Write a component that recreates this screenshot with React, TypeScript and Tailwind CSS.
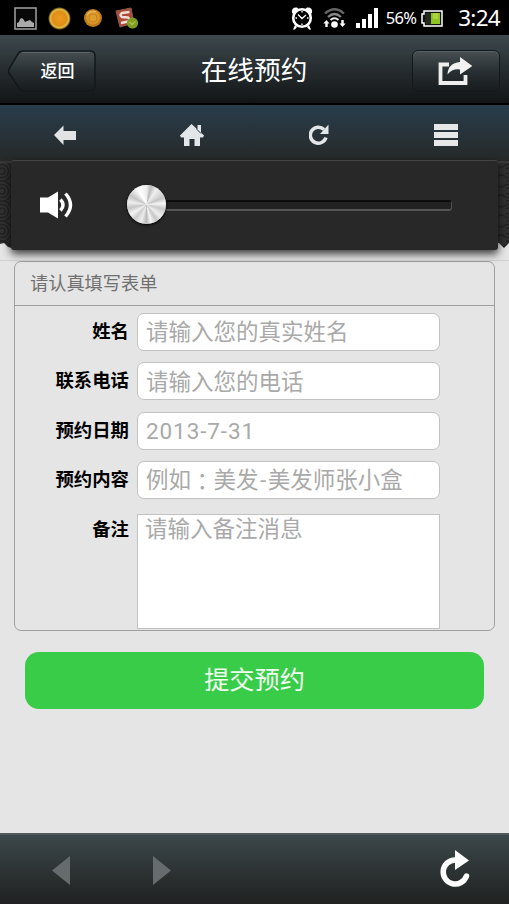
import { useState } from 'react';

interface Field {
  label: string;
  placeholder: React.ReactNode;
}

const fields: Field[] = [
  { label: '姓名', placeholder: '请输入您的真实姓名' },
  { label: '联系电话', placeholder: '请输入您的电话' },
  { label: '预约日期', placeholder: <span className="tracking-[0.900px]">2013-7-31</span> },
  {
    label: '预约内容',
    placeholder: (
      <>
        例如<span className="font-['Noto_Sans_CJK_TC',sans-serif]" lang="zh-TW">：</span>美发
        <span className="px-[1.500px]">-</span>美发师张小盒
      </>
    ),
  },
];

export default function App() {
  return (
    <div className="relative flex h-[904px] w-[509px] flex-col overflow-hidden bg-[#e5e5e5] font-[Roboto,'Noto_Sans_CJK_SC',sans-serif]">
      <StatusBar />
      <TitleBar />
      <NavBar />
      <Banner />
      <main className="flex flex-1 flex-col border-t border-[#d2d2d2]">
        <BookingForm />
        <button className="mr-[25px] ml-[25px] mt-[21px] h-[57px] rounded-[14px] bg-[#39cc49] text-[25.2px] leading-none text-[#f0fff0]">
          提交预约
        </button>
      </main>
      <BottomBar />
      <VolumePanel />
    </div>
  );
}

function StatusBar() {
  return (
    <div className="flex h-[35px] shrink-0 items-center justify-between bg-black pt-[1px] pr-[9px] pl-[14px] text-white">
      <div className="flex items-center">
        <svg width="23" height="23" viewBox="0 0 23 23">
          <rect x="1" y="1" width="21" height="21" fill="#080808" stroke="#999" strokeWidth="1.6" />
          <path d="M3 20v-4l2-1 1-3 2-1 2 2 1 2 2-1 3-1 2 2 2 1v4z" fill="#aaa" />
        </svg>
        <svg className="ml-[11px]" width="23" height="23" viewBox="0 0 23 23">
          <defs>
            <radialGradient id="sun">
              <stop offset="0" stopColor="#ee9b22" />
              <stop offset=".62" stopColor="#df8d16" />
              <stop offset=".8" stopColor="#e0bd48" />
              <stop offset=".9" stopColor="#8c6b20" />
              <stop offset="1" stopColor="#000" />
            </radialGradient>
          </defs>
          <circle cx="11.5" cy="11.5" r="11.5" fill="url(#sun)" />
        </svg>
        <svg className="ml-[12px]" width="20" height="20" viewBox="0 0 20 20">
          <circle cx="10" cy="10" r="9" fill="#c17a18" />
          <circle cx="10" cy="9.5" r="7" fill="#d79428" />
          <circle cx="10" cy="10" r="4" fill="#df9d2c" stroke="#c98520" />
          <path d="M4 7Q7 2 13 4" fill="none" stroke="#e4b157" strokeWidth="1.6" />
        </svg>
        <svg className="ml-[12px]" width="25" height="23" viewBox="0 0 25 23">
          <path d="M1 4 16 1l3 15-14 4z" fill="#ad4b39" stroke="#8c5b4c" strokeWidth="1" />
          <path d="M14.500 5 7 6Q4 8 7 10l6 .5q3 2 0 4l-7 1.500" fill="none" stroke="#eedfd6" strokeWidth="2.500" />
          <circle cx="17.500" cy="16" r="5.600" fill="#7e9d23" />
          <path d="m14.500 15 2.500 2.500 3.500-3" fill="none" stroke="#a9c248" strokeWidth="1.500" />
        </svg>
      </div>
      <div className="flex items-center">
        <svg width="22" height="24" viewBox="0 0 22 24">
          <circle cx="11" cy="12" r="8.800" fill="none" stroke="#fff" strokeWidth="2.600" />
          <path d="M1 7Q0 1 6 1.500L7.500 3 2.500 8zM21 7q1-6-5-5.500L14.500 3l5 5zM4 19l2 2-2 2.500H2zM18 19l-2 2 2 2.500h2z" fill="#fff" />
          <path d="m7 8.500 4 4 4-3.500M11 5v1.500M11 17.500V19M4.500 12H6M16 12h1.500" fill="none" stroke="#fff" strokeWidth="1.300" />
        </svg>
        <svg className="ml-[10px]" width="23" height="22" viewBox="0 0 23 22">
          <path d="M2 6.500Q11.500-2 21 6.500" fill="none" stroke="#666" strokeWidth="2.200" />
          <path d="M5 10q6.500-6 13 0" fill="none" stroke="#888" strokeWidth="2.200" />
          <path d="M7.500 13q4-3.500 8 0" fill="none" stroke="#eee" strokeWidth="2" />
          <circle cx="11.500" cy="17.500" r="3.300" fill="#fff" />
          <path d="m3.500 13 3 3.500H4.700V20H2.300v-3.500h-2zM19.500 20l-3-3.500h1.800V13h2.400v3.500h2z" fill="#fff" />
        </svg>
        <svg className="ml-[10px]" width="22" height="20" viewBox="0 0 22 20">
          <path d="M0 15h4v5H0zM6 11h4v9H6zM12 6h4v14h-4zM18 0h4v20h-4z" fill="#fff" />
        </svg>
        <span className="ml-[8px] font-['Noto_Sans',sans-serif] text-[16.500px] tracking-[-0.700px]">56%</span>
        <svg className="ml-[5px]" width="22" height="17" viewBox="0 0 22 17">
          <path d="M3 1h18v15H3v-3H1V4h2z" fill="#111" stroke="#fff" strokeWidth="1.500" />
          <path d="M4.500 3H10v11H4.500z" fill="#252a20" />
          <path d="M10 3h9v11h-9z" fill="#8fc31f" />
          <path d="M12 3h5v6h-5z" fill="#a8d63a" />
        </svg>
        <span className="ml-[15px] font-['Noto_Sans',sans-serif] text-[22.500px] leading-none tracking-[-0.700px]">3:24</span>
      </div>
    </div>
  );
}

function TitleBar() {
  return (
    <header className="grid h-[70px] shrink-0 grid-cols-[88px_1fr_88px] items-center border-b-2 border-black bg-linear-to-b from-[#3d494e] via-[#272d30] to-[#121516] pt-[3px] pr-[9px] pl-[8px] text-white">
      <button className="relative flex h-[42px] items-center justify-center pt-[2px] pl-[11px] text-[17px]">
        <svg className="absolute inset-0" width="88" height="42" viewBox="0 0 88 42">
          <defs>
            <linearGradient id="back" x2="0" y2="1">
              <stop offset="0" stopColor="#474f52" />
              <stop offset=".5" stopColor="#293033" />
              <stop offset="1" stopColor="#171b1d" />
            </linearGradient>
          </defs>
          <path d="M15 1H82q5 0 5 5v30q0 5-5 5H16q-3 0-5-3L1 23q-1-2 0-4L10 4q2-3 5-3z" fill="url(#back)" stroke="#12191c" strokeWidth="1.500" />
          <path d="M14 2.500H82" stroke="#5c6568" strokeWidth="1" />
        </svg>
        <span className="relative font-medium">返回</span>
      </button>
      <h1 className="pt-px text-center text-[26.700px] leading-none">在线预约</h1>
      <button className="flex h-[42px] items-center justify-center rounded-[6px] border-[1.500px] border-[#12191c] bg-linear-to-b from-[#474f52] via-[#293033] to-[#171b1d] pr-[2px] shadow-[inset_0_1px_0_#586265]">
        <svg width="34" height="30" viewBox="0 0 34 30">
          <path d="M11 8.500H2.500v18.500h25V19" fill="none" stroke="#eee" strokeWidth="3.800" />
          <path d="M22 1 34.500 10 22 18.500v-5Q14 12.500 9.500 18.500 10 7 22 6z" fill="#f1f1f1" />
        </svg>
      </button>
    </header>
  );
}

function NavBar() {
  return (
    <nav className="grid h-[56px] shrink-0 grid-cols-4 place-items-center bg-linear-to-b from-[#293d4c] to-[#262928] pt-[3px] pl-[1px]">
      <svg width="22" height="20" viewBox="0 0 22 20">
        <path d="M0 10 9.500.5V6H22v9H9.500v5z" fill="#e2e3e4" />
      </svg>
      <svg width="24" height="22" viewBox="0 0 24 22">
        <path d="M11.500 0 17 5V1h4v7.500l3 3-1 2h-3v8.500h-5.500v-7h-5v7H4v-8.500H1l-1-2z" fill="#e2e6e9" />
        <path d="M17 1v4.500l4 4" fill="none" stroke="#2a3439" strokeWidth="1" />
      </svg>
      <svg width="20" height="22" viewBox="0 0 20 22">
        <path d="M15 5.500A8 8 0 1 0 17 13.500" fill="none" stroke="#e2e6e9" strokeWidth="3.500" />
        <path d="M19.500.5V10H11z" fill="#e2e6e9" />
      </svg>
      <svg width="24" height="22" viewBox="0 0 24 22">
        <path d="M0 0h24v6H0zM0 8h24v6H0zM0 16h24v6H0z" fill="#e6e7e8" />
      </svg>
    </nav>
  );
}

// engraved ripple strip with a torn lower edge
function Banner() {
  return (
    <svg className="h-[99px] w-full shrink-0" width="509" height="99" viewBox="0 0 509 99">
      <defs>
        <pattern id="ripple" width="22" height="20" patternUnits="userSpaceOnUse">
          <rect width="22" height="20" fill="#303030" />
          <g fill="none" stroke="#222" strokeWidth="1.500">
            <circle cx="2" cy="10" r="3" />
            <circle cx="2" cy="10" r="6.500" />
            <circle cx="2" cy="10" r="10" />
            <circle cx="17" cy="20" r="6" />
            <circle cx="17" cy="0" r="6" />
          </g>
        </pattern>
      </defs>
      <path d="M0 0h509v82l-5 5-5-5-487 5-4-1-4-4-4 1z" fill="url(#ripple)" />
      <path d="M0 1h509" stroke="#444" />
    </svg>
  );
}

function VolumePanel() {
  const [volume] = useState(0);

  return (
    <div className="absolute top-[160px] left-[11px] flex h-[90px] w-[487px] items-center rounded-[3px] border-t border-[#454545] bg-[#282828] pl-[29px] shadow-[0_4px_9px_rgba(0,0,0,0.750)]">
      <svg className="-mt-px" width="34" height="28" viewBox="0 0 34 28">
        <path d="M0 6.500h8L18 .5v27L8 21.500H0z" fill="#fff" />
        <path d="M20.500 8.500q5 5.500 0 11M25.500 2.500q10 11.500 0 23" fill="none" stroke="#fff" strokeWidth="3.400" />
      </svg>
      <div className="relative ml-[54px] h-[11px] w-[324px] rounded-[3px] border-t-2 border-r border-b-2 border-t-[#0c0c0c] border-r-[#505050] border-b-[#555] bg-[#222]">
        <div
          className="absolute top-[-17px] size-[39px] rounded-full bg-[conic-gradient(#eee,#bbb_4%,#eee_9%,#ddd_14%,#c4c4c4_19%,#f6f6f6_24%,#c9c9c9_29%,#eee_36%,#c6c6c6_41%,#f5f5f5_46%,#bbb_50%,#ededed_55%,#ccc_61%,#f3f3f3_66%,#c5c5c5_72%,#eee_77%,#c4c4c4_83%,#fff_92%,#eee)] shadow-[0_1px_3px_#000,inset_0_0_1px_#fff]"
          style={{ left: volume - 1 }}
        />
      </div>
    </div>
  );
}

function BookingForm() {
  return (
    <section className="mr-[14px] ml-[14px] h-[370px] shrink-0 rounded-[7px] border-[1.500px] border-[#a0a0a0]">
      <h2 className="flex h-[44px] items-center border-b-[1.500px] border-[#a0a0a0] pl-[15px] text-[18.200px] text-[#707070]">
        请认真填写表单
      </h2>
      <div className="flex flex-col gap-[11.400px] pt-[7px]">
        {fields.map(field => (
          <div key={field.label} className="flex h-[38px]">
            <FieldLabel text={field.label} />
            <div className="flex w-[303px] items-center rounded-[7px] border-[1.500px] border-[#c2c2c2] bg-white pt-[2px] pl-[8px] text-[22.500px] whitespace-nowrap text-[#a9a9a9]">
              {field.placeholder}
            </div>
          </div>
        ))}
        <div className="mt-[3px] flex">
          <span className="-mt-[3px]">
            <FieldLabel text="备注" />
          </span>
          <div className="h-[115px] w-[303px] border border-[#c2c2c2] bg-white pl-[7px] text-[22.500px] leading-[29px] text-[#a9a9a9]">
            请输入备注消息
          </div>
        </div>
      </div>
    </section>
  );
}

function FieldLabel({ text }: { text: string }) {
  return (
    <span className="block w-[122px] pt-[6px] pr-[8px] text-right text-[18.400px] leading-[26px] font-bold text-black">
      {text}
    </span>
  );
}

function BottomBar() {
  return (
    <footer className="flex h-[71px] shrink-0 items-center border-t-2 border-[#50585b] bg-linear-to-b from-[#3c484a] to-[#202121] pt-[2px] pr-[38px] pl-[52px]">
      <svg width="18" height="29" viewBox="0 0 18 29">
        <path d="M18 0v29L0 14.500z" fill="#666b6d" />
      </svg>
      <svg className="ml-[83px]" width="18" height="29" viewBox="0 0 18 29">
        <path d="M0 0v29l18-14.500z" fill="#666b6d" />
      </svg>
      <svg className="mb-[3px] ml-auto" width="32" height="38" viewBox="0 0 32 38">
        <path d="M16 10A12 12 0 1 0 27.500 26" fill="none" stroke="#fff" strokeWidth="5.500" strokeLinecap="round" />
        <path d="M16 0 30 10.500 16 20z" fill="#fff" />
      </svg>
    </footer>
  );
}
